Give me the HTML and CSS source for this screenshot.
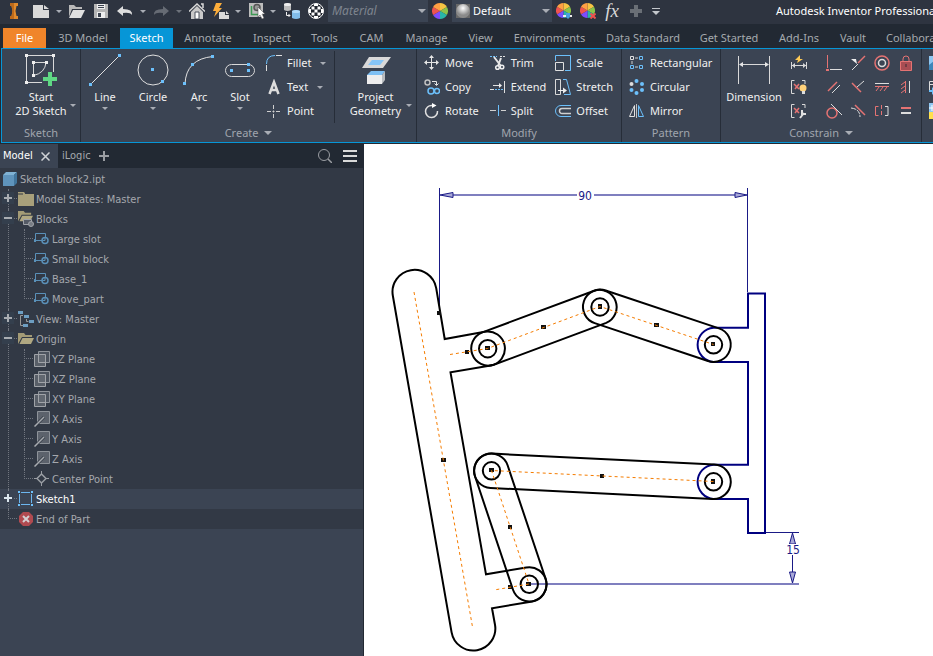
FILE: index.html
```html
<!DOCTYPE html>
<html lang="en">
<head>
<meta charset="utf-8">
<title>Autodesk Inventor Professional</title>
<link rel="stylesheet" href="styles.css">
</head>
<body>
<svg class="defs" aria-hidden="true">
  <symbol id="wheel" viewBox="0 0 16 16">
    <path d="M8 8V0A8 8 0 0 1 14.9 4z" fill="#f6c443"/><path d="M8 8L14.9 4A8 8 0 0 1 14.9 12z" fill="#8bc34a"/>
    <path d="M8 8L14.9 12A8 8 0 0 1 8 16z" fill="#29b6a8"/><path d="M8 8V16A8 8 0 0 1 1.1 12z" fill="#7c4dff"/>
    <path d="M8 8L1.1 12A8 8 0 0 1 1.1 4z" fill="#ef5350"/><path d="M8 8L1.1 4A8 8 0 0 1 8 0z" fill="#ff9f43"/>
  </symbol>
  <symbol id="block" viewBox="0 0 16 16">
    <path d="M1.500 9.500V2.500h10v4M1 9.500h7" fill="none" stroke="#5a90b8"/><path d="M0 8h2v3H0z" fill="#5a90b8"/>
    <circle cx="11" cy="9.500" r="3" fill="none" stroke="#5a90b8" stroke-width="1.500"/><path d="M11 7v2.500H8.500" fill="none" stroke="#5a90b8"/>
  </symbol>
  <symbol id="plane" viewBox="0 0 16 16">
    <path d="M4.500.5h11v11h-11z" fill="#4d545f" stroke="#8d9299"/><path d="M.5 3.500h11v12H.5z" fill="#6a6f78" fill-opacity=".7" stroke="#a0a3a8"/>
    <path d="M4.500 3.500v8h7" fill="none" stroke="#a0a3a8"/>
  </symbol>
  <symbol id="axis" viewBox="0 0 16 16">
    <path d="M3.500.5h12v12h-12z" fill="#5c626c" stroke="#8d9299"/><path d="M.5 15.500L10 6" stroke="#323945" stroke-width="3"/><path d="M.5 15.500L10 6" stroke="#a8abb0" stroke-width="1.500"/>
  </symbol>
  <symbol id="openfolder" viewBox="0 0 16 16">
    <path d="M0 12V1h6l1.500 2H14v2H4z" fill="#a39b76"/><path d="M4.500 6H16l-3 6H1.500z" fill="#b0a882"/>
  </symbol>
</svg>

<header class="titlebar">
  <button class="tool" aria-label="Application menu"><svg width="10" height="16" viewBox="0 0 10 16"><path d="M1 0h8v3H7.500l-1 5 1 5H9v3H1v-3h1.500l1-5-1-5H1z" fill="#e08a2c"/><path d="M1 0h4v16H1v-3h1.500l1-5-1-5H1z" fill="#bd6a1b"/></svg></button>
  <button class="tool" aria-label="New"><svg width="16" height="13" viewBox="0 0 16 13"><path d="M0 0h10v5h6v8H0z" fill="#d9d9d9"/><path d="M11 0l5 4h-5z" fill="#d9d9d9"/></svg></button>
  <button class="tool" aria-label="New options"><i class="arrow"></i></button>
  <button class="tool" aria-label="Open"><svg width="17" height="13" viewBox="0 0 17 13"><path d="M1 12V0h5l2 2h6v2H4z" fill="#b9b9b9"/><path d="M5 5h12l-4 8H1z" fill="#e0e0e0"/></svg></button>
  <button class="tool" aria-label="Save"><svg width="14" height="14" viewBox="0 0 14 14"><path d="M0 0h14v14H0z" fill="#b5b5b5"/><path d="M3 0h8v5H3zM3 8h8v6H3z" fill="#eee"/><path d="M4 1h6v1H4zM4 3h6v1H4zM4 9h3v4H4z" fill="#3c434f"/></svg></button>
  <button class="tool" aria-label="Undo"><svg width="16" height="10" viewBox="0 0 16 10"><path d="M6 0L0 5l6 5V7q7-1 9 2 1-6-9-6z" fill="#dedede"/></svg></button>
  <button class="tool" aria-label="Undo options"><i class="arrow"></i></button>
  <button class="tool" aria-label="Redo"><svg width="16" height="10" viewBox="0 0 16 10"><path d="M10 0l6 5-6 5V7q-7-1-9 2-1-6 9-6z" fill="#666b74"/></svg></button>
  <button class="tool" aria-label="Redo options"><i class="arrow dim"></i></button>
  <button class="tool" aria-label="Home"><svg width="16" height="16" viewBox="0 0 16 16"><path d="M2 9l6-6 6 6v7H2z" fill="#c9c9c9"/><path d="M0 8.500L8 1l8 7.500M12 1h2v4" fill="none" stroke="#d9d9d9" stroke-width="1.500"/><path d="M6 16V9h4v7z" fill="#fff" stroke="#4b515c"/></svg></button>
  <button class="tool" aria-label="Update"><svg width="16" height="16" viewBox="0 0 16 16"><path d="M3 0h6L6 5h3L1 14l2-6H0z" fill="#fdae3b"/><path d="M6 9h6v3h4v4H6zM13 8l3 3h-3z" fill="#d9d9d9"/></svg></button>
  <button class="tool" aria-label="Update options"><i class="arrow"></i></button>
  <button class="tool" aria-label="Select"><svg width="16" height="16" viewBox="0 0 16 16"><path d="M0 0h14v14H0z" fill="#bdbdbd"/><path d="M2.500 3v8.500H9" fill="none" stroke="#3e9a55" stroke-width="1.500"/><circle cx="8" cy="4.500" r="3" fill="#999" stroke="#555" stroke-width="1.500"/><path d="M9 4l7 7h-3l2 4-2 1-2-4-2 2z" fill="#fff" stroke="#444" stroke-width=".5"/></svg></button>
  <button class="tool" aria-label="Select options"><i class="arrow"></i></button>
  <button class="tool" aria-label="Replace"><svg width="16" height="16" viewBox="0 0 16 16"><path d="M0 1q3.500-2 7 0v6q-3.500 2-7 0z" fill="#bcbcbc"/><ellipse cx="3.500" cy="1.500" rx="3.500" ry="1.500" fill="#eee"/><path d="M2.500 9v3.500H6M4.500 11L6 12.500 4.500 14" fill="none" stroke="#eee"/><path d="M8 8q4-2 8 0v7q-4 2-8 0z" fill="#82bdea"/><ellipse cx="12" cy="8.500" rx="4" ry="1.500" fill="#b3dcfa"/></svg></button>
  <button class="tool" aria-label="Material browser"><svg width="16" height="16" viewBox="0 0 16 16"><circle cx="8" cy="8" r="7.500" fill="#20252e" stroke="#fff"/><path d="M6 1h4v2H6zM6 13h4v2H6zM1 6h2v4H1zM13 6h2v4h-2zM6.500 6.500h3v3h-3zM3.500 3.500h3v3h-3zM9.500 3.500h3v3h-3zM3.500 9.500h3v3h-3zM9.500 9.500h3v3h-3z" fill="#fff"/></svg></button>
  <label class="combo material"><select aria-label="Material"><option>Material</option></select></label>
  <button class="tool" aria-label="Appearance browser"><svg width="16" height="16"><use href="#wheel"/></svg></button>
  <label class="combo"><svg width="14" height="14" viewBox="0 0 14 14"><defs><radialGradient id="ball" cx=".5" cy=".3"><stop stop-color="#fff"/><stop offset="1" stop-color="#8a8a8a"/></radialGradient></defs><path d="M0 0h14v14H0z" fill="#686868"/><circle cx="7" cy="7" r="7" fill="url(#ball)"/></svg><select aria-label="Appearance"><option>Default</option></select></label>
  <button class="tool" aria-label="Adjust appearance"><svg width="16" height="16" viewBox="0 0 16 16"><use href="#wheel" width="15" height="15"/><path d="M7 12h9v2H7z" fill="#eee"/><path d="M10 10h4v4l-2 2-2-2z" fill="#4a9fe0"/></svg></button>
  <button class="tool" aria-label="Clear appearance"><svg width="16" height="16" viewBox="0 0 16 16"><use href="#wheel" width="15" height="15"/><path d="M10.500 10.500l5 5m0-5l-5 5" stroke="#f0504d" stroke-width="2"/></svg></button>
  <button class="tool fx" aria-label="Parameters">fx</button>
  <button class="tool" aria-label="Add"><svg width="12" height="12" viewBox="0 0 12 12"><path d="M4 0h4v4h4v4H8v4H4V8H0V4h4z" fill="#6a6f76"/></svg></button>
  <button class="tool" aria-label="Customize toolbar"><svg width="8" height="7" viewBox="0 0 8 7"><path d="M0 0h8v1H0zM0 3h8L4 7z" fill="#c3c7cc"/></svg></button>
  <span class="apptitle">Autodesk Inventor Professional</span>
</header>

<nav class="tabs">
  <a class="file" href="#">File</a><a href="#">3D Model</a><a class="current" href="#">Sketch</a><a href="#">Annotate</a><a href="#">Inspect</a><a href="#">Tools</a><a href="#">CAM</a><a href="#">Manage</a><a href="#">View</a><a href="#">Environments</a><a href="#">Data Standard</a><a href="#">Get Started</a><a href="#">Add-Ins</a><a href="#">Vault</a><a href="#">Collaborate</a>
</nav>

<section class="ribbon">
  <div class="group sketch">
    <button class="big side"><svg width="32" height="32" viewBox="0 0 32 32"><path d="M1.500 2v26M2 1.500h26M28.500 2v16M2 28.500h15" fill="none" stroke="#d9d9d9"/><path d="M8.500 21V8.500H21Q20 19 8.500 21.500" fill="none" stroke="#d9d9d9"/><path d="M0 0h3v3H0zM27 0h3v3h-3zM0 27h3v3H0zM7 7h3v3H7zM20 7h3v3h-3zM7 20h3v3H7z" fill="#eee"/><path d="M23 18h4v5h5v4h-5v5h-4v-5h-5v-4h5z" fill="#5fd884"/></svg><span>Start<br>2D Sketch</span><i class="arrow"></i></button>
    <h2>Sketch</h2>
  </div>
  <div class="group create">
    <div class="tools">
      <button class="big"><svg width="32" height="32" viewBox="0 0 32 32"><path d="M2 30L30 2" stroke="#e0e0e0"/><path d="M0 29h3v3H0zM29 0h3v3h-3z" fill="#6cc0fb"/></svg><span>Line</span><i class="arrow"></i></button>
      <button class="big"><svg width="32" height="32" viewBox="0 0 32 32"><circle cx="16" cy="16" r="15" fill="none" stroke="#e0e0e0"/><path d="M14 14h3v3h-3zM24 26h3v3h-3z" fill="#6cc0fb"/></svg><span>Circle</span><i class="arrow"></i></button>
      <button class="big"><svg width="32" height="32" viewBox="0 0 32 32"><path d="M2 30Q3 5 30 2.500" fill="none" stroke="#e0e0e0"/><path d="M0 28h3v3H0zM8 9h3v3H8zM28 1h3v3h-3z" fill="#6cc0fb"/></svg><span>Arc</span><i class="arrow"></i></button>
      <button class="big"><svg width="32" height="32" viewBox="0 0 32 32"><rect x="1.500" y="10.500" width="29" height="12" rx="6" fill="none" stroke="#d9d9d9"/><path d="M6 15h3v3H6zM23 9h3v3h-3zM23 15h3v3h-3z" fill="#6cc0fb"/></svg><span>Slot</span><i class="arrow"></i></button>
      <div class="stack">
        <button class="small"><svg width="16" height="16" viewBox="0 0 16 16"><path d="M.5 9Q.5.500 9 .5" fill="none" stroke="#6cc0fb"/><path d="M.5 10v6M10 .5h6" stroke="#e0e0e0"/></svg><span>Fillet</span><i class="arrow"></i></button>
        <button class="small"><svg width="16" height="16" viewBox="0 0 16 16"><path d="M3.500 15L8 3l4.500 12M5 11h6" fill="none" stroke="#dedede" stroke-width="2.500"/></svg><span>Text</span><i class="arrow"></i></button>
        <button class="small"><svg width="16" height="16" viewBox="0 0 16 16"><path d="M1 8.500h4M10 8.500h4M7.500 2v4M7.500 11v4M6.500 8.500h2M7.500 7.500v2" stroke="#d0d0d0"/></svg><span>Point</span></button>
      </div>
      <button class="big project side"><svg width="32" height="32" viewBox="0 0 32 32"><path d="M9 3h22l-8 11H2z" fill="#d9d9d9"/><path d="M12 6h12l-4 5H8z" fill="#86c5f7"/><path d="M11 17h14v0l-3 4H7z" fill="#7ec0f4"/><path d="M7 21h15v9H7z" fill="#eee"/><path d="M22 21l3-4v9l-3 4z" fill="#b9bcc0"/></svg><span>Project<br>Geometry</span><i class="arrow"></i></button>
    </div>
    <h2>Create <i class="arrow wide"></i></h2>
  </div>
  <div class="group modify">
    <div class="tools">
      <div class="stack">
        <button class="small"><svg width="16" height="16" viewBox="0 0 16 16"><path d="M7.500 2v12M2 7.500h12" stroke="#e6e6e6"/><path d="M7.500 0L10 3H5zM7.500 15L5 12h5zM0 7.500L3 5v5zM15 7.500L12 5v5z" fill="#e6e6e6"/></svg><span>Move</span></button>
        <button class="small"><svg width="16" height="16" viewBox="0 0 16 16"><circle cx="3.500" cy="3.500" r="2.500" fill="none" stroke="#c0c0c0" stroke-width="1.500"/><path d="M8 2.500h4.500V6M10.500 4.500l2 2 2-2" fill="none" stroke="#e6e6e6"/><circle cx="7" cy="12" r="3" fill="none" stroke="#6cc0fb" stroke-width="1.500"/><circle cx="13" cy="12" r="2.500" fill="none" stroke="#6cc0fb" stroke-width="1.500"/></svg><span>Copy</span></button>
        <button class="small"><svg width="16" height="16" viewBox="0 0 16 16"><path d="M8 2.500A6 6 0 1 0 13.500 8" fill="none" stroke="#e0e0e0" stroke-width="1.500"/><path d="M8 0l4.500 2.500L8 5z" fill="#fff"/></svg><span>Rotate</span></button>
      </div>
      <div class="stack">
        <button class="small"><svg width="16" height="16" viewBox="0 0 16 16"><path d="M0 1.500h7" stroke="#6cc0fb" stroke-dasharray="2 1"/><path d="M10 1.500h6" stroke="#e0e0e0" stroke-dasharray="2 1"/><path d="M4 2l7 9M11 3L8 11" stroke="#e6e6e6" stroke-width="2"/><circle cx="7.500" cy="12.500" r="1.800" fill="none" stroke="#eee" stroke-width="1.500"/><circle cx="12" cy="12" r="1.800" fill="none" stroke="#eee" stroke-width="1.500"/></svg><span>Trim</span></button>
        <button class="small"><svg width="16" height="16" viewBox="0 0 16 16"><path d="M3 6.500h7M14.500 2v12M0 10.500h4" stroke="#e0e0e0"/><path d="M9 4l3 2.500L9 9z" fill="#eee"/><path d="M5 10.500h9" stroke="#6cc0fb" stroke-dasharray="2 1"/></svg><span>Extend</span></button>
        <button class="small"><svg width="16" height="16" viewBox="0 0 16 16"><path d="M0 7.500h6M11 7.500h5" stroke="#d0d0d0"/><path d="M8.500 2v11" stroke="#6cc0fb"/></svg><span>Split</span></button>
      </div>
      <div class="stack">
        <button class="small"><svg width="16" height="16" viewBox="0 0 16 16"><path d="M.5 6V.5h15v15H10" fill="none" stroke="#6cc0fb"/><path d="M.5 7.500h8v8h-8z" fill="none" stroke="#e0e0e0"/></svg><span>Scale</span></button>
        <button class="small"><svg width="16" height="16" viewBox="0 0 16 16"><path d="M.5.500h5v15h-5z" fill="none" stroke="#d9d9d9"/><path d="M8 .5h3.500l4 15H9" fill="none" stroke="#6cc0fb"/><path d="M3 11.500h6" stroke="#eee"/><path d="M8 8.500l4 3-4 3z" fill="#eee"/></svg><span>Stretch</span></button>
        <button class="small"><svg width="16" height="16" viewBox="0 0 16 16"><path d="M16 2.500H6a5.500 5.500 0 0 0 0 11h10" fill="none" stroke="#6cc0fb"/><path d="M16 5.500H7a2.500 2.500 0 0 0 0 5h9" fill="none" stroke="#d0d0d0" stroke-width="1.500"/></svg><span>Offset</span></button>
      </div>
    </div>
    <h2>Modify</h2>
  </div>
  <div class="group pattern">
    <div class="tools">
      <div class="stack">
        <button class="small"><svg width="16" height="16" viewBox="0 0 16 16"><path d="M1.500 1.500h3v3h-3z" fill="none" stroke="#e0e0e0"/><path d="M10.500 1.500h3v3h-3zM1.500 10.500h3v3h-3zM10.500 10.500h3v3h-3z" fill="none" stroke="#6cc0fb"/><path d="M6 3h3M3 6v3M6 12h3" stroke="#d0d0d0"/></svg><span>Rectangular</span></button>
        <button class="small"><svg width="16" height="16" viewBox="0 0 16 16"><g fill="#6cc0fb"><circle cx="7.500" cy="2" r="2"/><circle cx="13" cy="5" r="2"/><circle cx="13" cy="11" r="2"/><circle cx="7.500" cy="14" r="2"/><circle cx="2.500" cy="11" r="2"/></g><circle cx="2.500" cy="5" r="2" fill="#ddd"/></svg><span>Circular</span></button>
        <button class="small"><svg width="16" height="16" viewBox="0 0 16 16"><path d="M5.500 2.500v11h-5z" fill="none" stroke="#e0e0e0"/><path d="M9.500 2.500v11h5z" fill="none" stroke="#6cc0fb"/><path d="M7.500 1v14" stroke="#c0c0c0"/></svg><span>Mirror</span></button>
      </div>
    </div>
    <h2>Pattern</h2>
  </div>
  <div class="group constrain">
    <div class="tools">
      <button class="big"><svg width="32" height="32" viewBox="0 0 32 32"><path d="M.5 2v28M31.500 2v28M2 10.500h28" stroke="#d9d9d9"/><path d="M1 10.500L5 8v5zM31 10.500L27 8v5z" fill="#e6e6e6"/></svg><span>Dimension</span></button>
      <div class="grid">
        <button aria-label="Automatic dimensions"><svg width="16" height="16" viewBox="0 0 16 16"><path d="M.5 7v7M15.500 7v7M1 10.500h14" stroke="#d9d9d9"/><path d="M1 10.500L4 8v5zM15 10.500L12 8v5z" fill="#d9d9d9"/><path d="M9 0L4 5h3L6 8l6-4H9z" fill="#ffca55"/></svg></button>
        <button aria-label="Coincident"><svg width="16" height="16" viewBox="0 0 16 16"><path d="M1.500 0v13" stroke="#e57373"/><path d="M0 14h3v2H0z" fill="#e57373"/><path d="M4 14.500h12" stroke="#ddd"/></svg></button>
        <button aria-label="Collinear"><svg width="16" height="16" viewBox="0 0 16 16"><path d="M2 15L8 9" stroke="#ddd"/><path d="M8 8l7-7" stroke="#e57373" stroke-width="1.500"/><path d="M1 4l6 5-1-5z" fill="#eee"/></svg></button>
        <button aria-label="Concentric"><svg width="16" height="16" viewBox="0 0 16 16"><circle cx="8" cy="8" r="7" fill="none" stroke="#e57373" stroke-width="1.500"/><circle cx="8" cy="8" r="3.500" fill="none" stroke="#ddd" stroke-width="1.500"/></svg></button>
        <button aria-label="Fix"><svg width="12" height="16" viewBox="0 0 12 16"><path d="M3 7V4a3 3 0 0 1 6 0v3" fill="none" stroke="#e57373"/><path d="M.5 6.500h11v9H.5z" fill="#a94d53" stroke="#e57373"/><path d="M5.500 9h1v3h-1z" fill="#3b2c35"/></svg></button>
        <button aria-label="Show constraints"><svg width="16" height="16" viewBox="0 0 16 16"><path d="M3.500 1.500h-3v13h3M11 1.500h3V5" fill="none" stroke="#d9d9d9"/><path d="M3 5l5 5M4 10l4-5" stroke="#e57373" stroke-width="1.500"/><circle cx="12" cy="9" r="3.500" fill="#ffd27a"/><path d="M11 12h3v3h-3z" fill="#ddd"/></svg></button>
        <button aria-label="Parallel"><svg width="16" height="16" viewBox="0 0 16 16"><path d="M2 12L11 3" stroke="#e57373" stroke-width="1.500"/><path d="M6 14l8-8" stroke="#ddd"/></svg></button>
        <button aria-label="Perpendicular"><svg width="16" height="16" viewBox="0 0 16 16"><path d="M2 4l9 9" stroke="#e57373" stroke-width="1.500"/><path d="M7 8l7-6" stroke="#ddd"/></svg></button>
        <button aria-label="Horizontal"><svg width="16" height="16" viewBox="0 0 16 16"><path d="M1 4.500h14" stroke="#ddd"/><path d="M1 7.500h14M2 12l3-4M6 12l3-4M10 12l3-4" stroke="#e57373"/></svg></button>
        <button aria-label="Vertical"><svg width="16" height="16" viewBox="0 0 16 16"><path d="M11.500 2v12" stroke="#ddd"/><path d="M7.500 2v12M3 6l4-3M3 10l4-3M3 14l4-3" stroke="#e57373"/></svg></button>
        <button aria-label="Constraint settings"><svg width="16" height="16" viewBox="0 0 16 16"><path d="M3.500 1.500h-3v13h3M11 1.500h3V5" fill="none" stroke="#d9d9d9"/><path d="M3 5l5 5M4 10l4-5" stroke="#e57373" stroke-width="1.500"/><path d="M9 15l4-5M11 7v4h4" fill="none" stroke="#e0e0e0" stroke-width="2"/></svg></button>
        <button aria-label="Tangent"><svg width="16" height="16" viewBox="0 0 16 16"><circle cx="6" cy="10" r="5" fill="none" stroke="#e57373" stroke-width="1.500"/><path d="M5 1l11 11" stroke="#ddd"/></svg></button>
        <button aria-label="Smooth"><svg width="16" height="16" viewBox="0 0 16 16"><path d="M5 2l10 10" stroke="#e57373" stroke-width="1.500"/><path d="M1 5q9 1 9 9" fill="none" stroke="#ddd" stroke-dasharray="5 1"/></svg></button>
        <button aria-label="Symmetric"><svg width="16" height="16" viewBox="0 0 16 16"><path d="M4.500 3.500h-3v9h3" fill="none" stroke="#e57373"/><path d="M11 3.500h3v9h-3" fill="none" stroke="#ddd"/><path d="M7.500 2v12" stroke="#e57373" stroke-dasharray="4 2"/></svg></button>
        <button aria-label="Equal"><svg width="16" height="16" viewBox="0 0 16 16"><path d="M3 4h10v2H3z" fill="#e57373"/><path d="M3 9h10v2H3z" fill="#ddd"/></svg></button>
      </div>
    </div>
    <h2>Constrain <i class="arrow wide"></i></h2>
  </div>
  <div class="group insert">
    <button class="small" aria-label="Insert image"><svg width="16" height="16" viewBox="0 0 16 16"><path d="M0 1h16v14H0z" fill="#8fc7f2"/><path d="M0 10l6-5 10 10H0z" fill="#3f86b9"/></svg></button>
    <button class="small" aria-label="Import points"><svg width="16" height="16" viewBox="0 0 16 16"><path d="M.5 2.500h15v9H.5zM0 5.500h16M4.500 2v10" fill="none" stroke="#ddd"/><path d="M0 11h5v2H0zM3 8l3 4-3 4z" fill="#6cc0fb"/></svg></button>
    <button class="small" aria-label="Insert drawing"><svg width="16" height="16" viewBox="0 0 16 16"><path d="M0 0h16v9H0z" fill="#8fc7f2"/><path d="M0 9h16v7H0z" fill="#ffe04d"/><path d="M3 2v6M0 5h6" stroke="#fff"/></svg></button>
  </div>
</section>

<main class="workspace">
  <aside class="browser">
    <div class="browsertabs">
      <button class="on">Model<svg width="9" height="9" viewBox="0 0 9 9"><path d="M.5.500l8 8m0-8l-8 8" stroke="#cfd2d6" stroke-width="1.500"/></svg></button>
      <button>iLogic</button>
      <button aria-label="Add panel"><svg width="10" height="10" viewBox="0 0 10 10"><path d="M5 0v10M0 5h10" stroke="#9a9da2" stroke-width="2"/></svg></button>
      <button class="search" aria-label="Search"><svg width="14" height="14" viewBox="0 0 14 14"><circle cx="6" cy="6" r="5.500" fill="none" stroke="#9a9da2"/><path d="M10 10l4 4" stroke="#9a9da2" stroke-width="1.500"/></svg></button>
      <button aria-label="Panel menu"><svg width="14" height="12" viewBox="0 0 14 12"><path d="M0 0h14v2H0zM0 5h14v2H0zM0 10h14v2H0z" fill="#d9d9d9"/></svg></button>
    </div>
    <div class="treebox">
      <div class="row root"><svg width="14" height="14" viewBox="0 0 14 14"><path d="M0 3l3-3h11l-3 3z" fill="#7fb2d4"/><path d="M0 3h11v11H0z" fill="#5f94bc"/><path d="M11 3l3-3v11l-3 3z" fill="#41759c"/></svg><span>Sketch block2.ipt</span></div>
      <ul class="tree">
        <li><div class="row"><button class="exp" aria-label="Expand"><svg width="8" height="8" viewBox="0 0 8 8"><path d="M0 4h8M4 0v8" stroke="currentColor" stroke-width="2"/></svg></button><svg width="16" height="14" viewBox="0 0 16 14"><path d="M0 0h6l1.500 2H16v12H0z" fill="#a8a07b"/><path d="M0 2h5M7 1.500h9" stroke="#323945"/></svg><span>Model States: Master</span></div></li>
        <li><div class="row"><button class="exp" aria-label="Collapse"><svg width="8" height="8" viewBox="0 0 8 8"><path d="M0 4h8" stroke="currentColor" stroke-width="2"/></svg></button><svg width="16" height="16" viewBox="0 0 16 16"><use href="#openfolder" width="15" height="15" y="-1"/><path d="M5.500 8.500h8v5h-8z" fill="#555b66" stroke="#a0a3a8"/><circle cx="13" cy="13" r="2.500" fill="#777c84" stroke="#a0a3a8"/></svg><span>Blocks</span></div>
          <ul>
            <li><div class="row"><svg width="16" height="16"><use href="#block"/></svg><span>Large slot</span></div></li>
            <li><div class="row"><svg width="16" height="16"><use href="#block"/></svg><span>Small block</span></div></li>
            <li><div class="row"><svg width="16" height="16"><use href="#block"/></svg><span>Base_1</span></div></li>
            <li><div class="row"><svg width="16" height="16"><use href="#block"/></svg><span>Move_part</span></div></li>
          </ul></li>
        <li><div class="row"><button class="exp" aria-label="Expand"><svg width="8" height="8" viewBox="0 0 8 8"><path d="M0 4h8M4 0v8" stroke="currentColor" stroke-width="2"/></svg></button><svg width="16" height="16" viewBox="0 0 16 16"><path d="M0 0h5v3H0zM6 4h5v3H6zM11 9h5v3h-5zM5 13h5v3H5z" fill="#6d9ec2"/><path d="M5 4.500H2.500v10H5M8.500 8v2.500h2" fill="none" stroke="#999"/></svg><span>View: Master</span></div></li>
        <li><div class="row"><button class="exp" aria-label="Collapse"><svg width="8" height="8" viewBox="0 0 8 8"><path d="M0 4h8" stroke="currentColor" stroke-width="2"/></svg></button><svg width="16" height="16" viewBox="0 0 16 16"><use href="#openfolder" y="1" width="16" height="16"/></svg><span>Origin</span></div>
          <ul>
            <li><div class="row"><svg width="16" height="16"><use href="#plane"/></svg><span>YZ Plane</span></div></li>
            <li><div class="row"><svg width="16" height="16"><use href="#plane"/></svg><span>XZ Plane</span></div></li>
            <li><div class="row"><svg width="16" height="16"><use href="#plane"/></svg><span>XY Plane</span></div></li>
            <li><div class="row"><svg width="16" height="16"><use href="#axis"/></svg><span>X Axis</span></div></li>
            <li><div class="row"><svg width="16" height="16"><use href="#axis"/></svg><span>Y Axis</span></div></li>
            <li><div class="row"><svg width="16" height="16"><use href="#axis"/></svg><span>Z Axis</span></div></li>
            <li><div class="row"><svg width="16" height="16" viewBox="0 0 16 16"><path d="M7.500 3L12 7.500 7.500 12 3 7.500z" fill="none" stroke="#999da3" stroke-width="1.500"/><path d="M7.500 0v4M7.500 11v4M0 7.500h4M11 7.500h4" stroke="#999da3"/></svg><span>Center Point</span></div></li>
          </ul></li>
        <li><div class="row picked"><button class="exp" aria-label="Expand"><svg width="8" height="8" viewBox="0 0 8 8"><path d="M0 4h8M4 0v8" stroke="currentColor" stroke-width="2"/></svg></button><svg width="16" height="16" viewBox="0 0 16 16"><path d="M3 1.500h9M3 13.500h9M1.500 3v9M13.500 3v9" stroke="#6cb6ef"/><path d="M0 0h2v2H0zM13 0h2v2h-2zM0 13h2v2H0zM13 13h2v2h-2z" fill="#6cc0fb"/></svg><span>Sketch1</span></div></li>
        <li><div class="row"><svg width="16" height="16" viewBox="0 0 16 16"><path d="M5 1h6l4 4v6l-4 4H5l-4-4V5z" fill="#b04a50"/><path d="M5 5l6 6m0-6l-6 6" stroke="#d4cfd2" stroke-width="2"/></svg><span>End of Part</span></div></li>
      </ul>
    </div>
  </aside>

  <svg class="canvas" viewBox="364 144 569 512" preserveAspectRatio="xMinYMin meet" role="img" aria-label="Linkage sketch">
    <g class="dim">
      <path class="soft" d="M450 195H577M594 195H736M530 584H799"/>
      <path class="fine" d="M439.500 188V313M747.500 188V292M765 532.500H799M792.500 534V543M792.500 555V583"/>
      <path class="head" d="M440 195l13-2.500v5zM747 195l-12-2.500v5zM792.500 533l-3 11h6zM792.500 583l-3-11h6z"/>
      <path class="mask" d="M786 544h13v10h-13z"/>
      <text x="585" y="200">90</text><text x="793" y="554">15</text>
    </g>
    <g class="base">
      <path d="M748 293.500H765V533H748V499H713.500A17.200 17.200 0 0 1 713.500 464.700H748V362H713.500A17.200 17.200 0 0 1 713.500 327.700H748z"/>
    </g>
    <g class="part">
      <path d="M436.200 288.200L444.700 339 484.700 331.700A17.200 17.200 0 0 1 490.700 365.600L450.500 372.300 486 574.300 526.300 567.500A17.200 17.200 0 0 1 532.300 601.500L492 608.300 495 624.700A22 22 0 0 1 451.600 632.300L392.800 295.500A22 22 0 0 1 436.200 288.200z"/>
      <path d="M481.700 332.600L594.200 290.700A17.200 17.200 0 0 1 606.200 322.900L493.700 364.800A17.200 17.200 0 0 1 481.700 332.600z"/>
      <path d="M594.700 323.100L708 361A17.200 17.200 0 0 0 719 328.400L605.700 290.500A17.200 17.200 0 0 0 594.700 323.100z"/>
      <path d="M492.200 453.600L714.400 464.600A17.200 17.200 0 0 1 712.700 499L490.500 488A17.200 17.200 0 0 1 492.200 453.600z"/>
      <path d="M507.600 465.300L545.600 578.800A17.200 17.200 0 0 1 513 589.800L475 476.300A17.200 17.200 0 0 1 507.600 465.300z"/>
      <circle cx="487.700" cy="348.700" r="8.700"/><circle cx="600" cy="307" r="8.700"/><circle cx="713.500" cy="344.800" r="8.700"/>
      <circle cx="491.500" cy="470.800" r="8.700"/><circle cx="713.500" cy="481.800" r="8.700"/><circle cx="529.300" cy="584.300" r="8.700"/>
    </g>
    <path class="nodes" d="M437 311h4v4h-4zM465 350h4v4h-4zM485 346h5v4h-5zM541 325h5v4h-5zM598 304h4v5h-4zM654 323h5v4h-5zM711 342h4v4h-4zM441 458h5v4h-5zM489 468h5v4h-5zM600 474h4v4h-4zM508 525h4v4h-4zM508 585h4v4h-4zM526 582h5v4h-5zM711 479h4v5h-4z"/>
    <path class="axisline" d="M414 292L472.500 627M450 354.500L487.500 348.500 600 306.500 713.500 344.500M713.500 481.500L491.500 470.500 529 584 494 590"/>
  </svg>
</main>
</body>
</html>
```
FILE: styles.css
```css
* { box-sizing: border-box; }
body {
  margin: 0;
  height: 100vh;
  display: flex;
  flex-direction: column;
  overflow: hidden;
  background: #222933;
  color: #f0f0f0;
  font: 11px/14px "Noto Sans", "Open Sans", sans-serif;
}
svg { display: block; flex: none; }
button {
  padding: 0;
  border: 0;
  background: none;
  color: inherit;
  font: inherit;
  white-space: nowrap;
}
.defs { position: absolute; width: 0; height: 0; }
.arrow {
  display: inline-block;
  flex: none;
  border: solid transparent;
  border-width: 3px 3px 0;
  border-top-color: #a9adb5;
}
.arrow.dim { border-top-color: #6d727b; }
.arrow.wide { border-width: 4px 4px 0; border-top-color: #a9adb5; vertical-align: 2px; margin-left: 3px; }

/* title bar */
.titlebar {
  flex: none;
  height: 24px;
  padding-bottom: 2px;
  display: grid;
  grid-template-columns: 28px 26px 9px 26px 24px 24px 11px 26px 9px 28px 20px 14px 24px 7px 32px 20px 100px 24px 100px 24px 24px 24px 24px 16px 112px 1fr;
  align-items: center;
  background: #2e3440;
}
.tool { height: 22px; display: flex; align-items: center; justify-content: center; }
.tool:nth-child(16) { justify-content: flex-start; }
.fx { font: italic 19px/20px "Liberation Serif", serif; color: #d9d9d9; }
.combo {
  position: relative;
  height: 22px;
  display: flex;
  align-items: center;
  gap: 3px;
  padding-left: 4px;
  background: #3b4453;
}
.combo::after {
  content: "";
  position: absolute;
  right: 2px;
  top: 9px;
  border: solid transparent;
  border-width: 4px 4px 0;
  border-top-color: #a9adb5;
}
.combo select {
  appearance: none;
  flex: 1;
  min-width: 0;
  padding: 0;
  border: 0;
  background: none;
  color: #fff;
  font: inherit;
}
.material select { color: #7f858f; font-style: italic; font-size: 12px; }
.apptitle { grid-column: 26; white-space: nowrap; color: #fff; }

/* ribbon tabs */
.tabs {
  flex: none;
  height: 24px;
  padding: 4px 0 0 3px;
  display: grid;
  grid-template-columns: 43px 74px 53px 70px 58px 47px 47px 63px 45px 93px 94px 78px 62px 46px 1fr;
}
.tabs a {
  color: #a5a9ae;
  text-align: center;
  text-decoration: none;
  line-height: 20px;
  white-space: nowrap;
}
.tabs a:last-child { text-align: left; padding-left: 10px; }
.tabs .file { background: #f0852a; color: #fff; }
.tabs .current { background: #0696d7; color: #fff; }

/* ribbon */
.ribbon {
  flex: none;
  height: 95px;
  margin: 0 0 1px 1px;
  display: flex;
  overflow: hidden;
  border: 1px solid #0696d7;
  border-right: 0;
  background: #3b4453;
}
.group {
  flex: none;
  display: flex;
  flex-direction: column;
  justify-content: space-between;
  padding: 2px 0;
  border-right: 1px solid #262d38;
}
.group h2 { margin: 0; color: #a0a5ad; font: inherit; text-align: center; }
.tools { display: flex; }
.big {
  position: relative;
  display: flex;
  flex-direction: column;
  align-items: center;
  padding-top: 3px;
  height: 72px;
}
.big span { margin-top: 4px; line-height: 14px; }
.big .arrow { margin-top: 3px; }
.big.side .arrow { position: absolute; right: 4px; top: 53px; margin: 0; }
.stack { display: flex; flex-direction: column; }
.small { height: 24px; display: flex; align-items: center; gap: 5px; }
.small .arrow { margin-left: 4px; }
.sketch { width: 79px; }
.create { width: 336px; }
.create .tools { display: grid; grid-template-columns: 48px 48px 44px 38px 7px 68px 1fr; }
.create .stack { grid-column: 6; }
.project { border-left: 1px solid #262d38; }
.modify { width: 205px; }
.modify .tools, .pattern .tools { padding-left: 7px; }
.modify .stack { width: 66px; }
.pattern { width: 99px; }
.constrain { width: 201px; }
.constrain .tools { padding-left: 3px; }
.constrain .big { width: 60px; }
.grid {
  margin-left: 4px;
  display: grid;
  grid-template-columns: 34px repeat(4, 24px);
  grid-auto-rows: 24px;
}
.grid button { display: flex; align-items: center; justify-content: center; }
.grid button:nth-child(5n + 1) { padding-right: 12px; }
.insert { padding-left: 7px; border: 0; justify-content: flex-start; }

/* model browser */
.workspace { flex: 1; min-height: 0; display: flex; }
.browser {
  flex: none;
  width: 364px;
  border-right: 1px solid #222933;
  background: #3b4453;
  font: 11px/20px "DejaVu Sans Condensed", "DejaVu Sans", sans-serif;
  color: #a5a8ad;
}
.browsertabs { height: 24px; display: flex; padding-right: 2px; background: #222933; }
.browsertabs button { display: flex; align-items: center; padding: 0 4px; }
.browsertabs .on { width: 58px; padding: 0 8px 0 3px; justify-content: space-between; background: #3b4453; color: #fff; }
.browsertabs .search { margin-left: auto; margin-right: 3px; }
.treebox { padding-top: 1px; background: #323945; }
.row { height: 20px; display: flex; align-items: center; gap: 2px; padding-left: 18px; white-space: nowrap; }
.row span { padding-top: 1px; }
.root { padding-left: 3px; gap: 3px; }
.tree, .tree ul { margin: 0; padding: 0; list-style: none; }
.tree ul .row { padding-left: 34px; }
.tree li { position: relative; }
.tree li::before, .tree li::after { content: ""; position: absolute; left: 8px; top: 0; border: 0 dotted #71767f; }
.tree li::before { bottom: 0; border-left-width: 1px; }
.tree li::after { top: 9px; width: 9px; border-top-width: 1px; }
.tree li:last-child::before { bottom: auto; height: 10px; }
.tree ul li::before, .tree ul li::after { left: 24px; }
.exp {
  position: absolute;
  z-index: 1;
  left: 2px;
  top: 3px;
  width: 12px;
  height: 12px;
  display: flex;
  align-items: center;
  justify-content: center;
  background: #343f4d;
  color: #a9adb2;
}
.picked { background: #3b4453; color: #fff; }
.picked .exp { background: #3b4453; color: #dbe6ee; }

/* drawing */
.canvas { flex: 1; min-width: 0; width: 100%; height: 100%; background: #fff; }
.canvas path, .canvas circle { fill: none; }
.part { stroke: #000; stroke-width: 2; }
.base { stroke: #000080; stroke-width: 2; }
.dim .soft { stroke: #7f7fbf; stroke-width: 2; }
.dim .fine { stroke: #1a1a86; stroke-width: 1; }
.dim .head { fill: #a9a9d8; stroke: #1a1a86; stroke-width: 1; }
.dim .mask { fill: #fff; }
.dim text { fill: #1a1a86; font: 12px "DejaVu Sans Condensed", sans-serif; text-anchor: middle; }
.axisline { stroke: #f57c00; stroke-width: 1; stroke-dasharray: 3 3; }
.canvas .nodes { fill: #111; }
```
